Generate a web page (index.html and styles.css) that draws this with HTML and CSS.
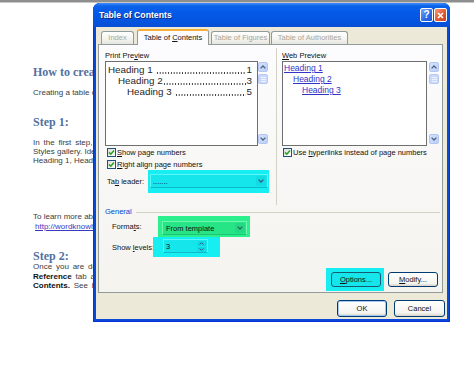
FILE: index.html
```html
<!DOCTYPE html>
<html>
<head>
<meta charset="utf-8">
<title>Table of Contents</title>
<link rel="stylesheet" href="styles.css">
</head>
<body>
<div class="topbar"></div>
<div class="doc">
  <h1 class="doc-h">How to create a table of contents</h1>
  <p class="doc-p intro">Creating a table of contents is easy.</p>
  <h2 class="doc-h step1">Step 1:</h2>
  <p class="doc-p para1">
    <span class="ln just">In the first step, apply heading styles from the</span>
    <span class="ln">Styles gallery. Identify the text you want</span>
    <span class="ln">Heading 1, Heading 2 and so on.</span>
  </p>
  <p class="doc-p learn">
    <span class="ln">To learn more about styles, visit</span>
    <a class="ln link">http://wordknowhow.com</a>
  </p>
  <h2 class="doc-h step2">Step 2:</h2>
  <p class="doc-p para2">
    <span class="ln just">Once you are done, go to the</span>
    <span class="ln just"><b>Reference</b> tab and click <b>Table of</b></span>
    <span class="ln just"><b>Contents.</b> See below.</span>
  </p>
</div>

<div class="dialog">
  <div class="titlebar">
    <span class="title">Table of Contents</span>
    <span class="tb-btns">
      <span class="tb-btn tb-help">?</span>
      <span class="tb-btn tb-close"><svg width="7" height="7" viewBox="0 0 7 7"><path d="M1 1 L6 6 M6 1 L1 6" stroke="#fff" stroke-width="1.6" fill="none"/></svg></span>
    </span>
  </div>
  <div class="dbody">
    <div class="tabs">
      <span class="tab t-index">Index</span>
      <span class="tab on t-toc">Table of <u>C</u>ontents</span>
      <span class="tab t-tof">Table of Figures</span>
      <span class="tab t-toa">Table of Authorities</span>
    </div>
    <div class="panel">
      <div class="cols">
        <div class="col col-l">
          <div class="lbl">Print Pre<u>v</u>iew</div>
          <div class="pv-row">
            <div class="pv-box print">
              <div class="toc-line"><span>Heading 1</span><span class="dots gap"></span><span>1</span></div>
              <div class="toc-line l2"><span>Heading 2</span><span class="dots"></span><span>3</span></div>
              <div class="toc-line l3"><span>Heading 3</span><span class="dots gap"></span><span>5</span></div>
            </div>
            <div class="sbar">
              <span class="sarrow"><svg width="6" height="4" viewBox="0 0 6 4"><path d="M0.6 3.4 L3 1 L5.4 3.4" fill="none" stroke="#4d6185" stroke-width="1.3"/></svg></span>
              <span class="thumb"><i></i><i></i><i></i></span>
              <span class="sp"></span>
              <span class="sarrow"><svg width="6" height="4" viewBox="0 0 6 4"><path d="M0.6 0.6 L3 3 L5.4 0.6" fill="none" stroke="#4d6185" stroke-width="1.3"/></svg></span>
            </div>
          </div>
          <div class="chk"><span class="cb"><svg width="7" height="7" viewBox="0 0 7 7"><path d="M1 3.4 L2.8 5.2 L6 1.6" fill="none" stroke="#21a121" stroke-width="1.5"/></svg></span><span><u>S</u>how page numbers</span></div>
          <div class="chk"><span class="cb"><svg width="7" height="7" viewBox="0 0 7 7"><path d="M1 3.4 L2.8 5.2 L6 1.6" fill="none" stroke="#21a121" stroke-width="1.5"/></svg></span><span><u>R</u>ight align page numbers</span></div>
          <div class="tl-row">
            <span class="tl-lbl">Ta<u>b</u> leader:</span>
            <span class="hl-cyan tl-hl">
              <span class="combo cy-combo">
                <span class="combo-txt">.......</span>
                <span class="dd"><svg width="6" height="4" viewBox="0 0 6 4"><path d="M0.6 0.6 L3 3 L5.4 0.6" fill="none" stroke="#3a5a86" stroke-width="1.3"/></svg></span>
              </span>
            </span>
          </div>
        </div>
        <div class="col col-r">
          <div class="lbl"><u>W</u>eb Preview</div>
          <div class="pv-row">
            <div class="pv-box web">
              <a>Heading 1</a>
              <a class="w2">Heading 2</a>
              <a class="w3">Heading 3</a>
            </div>
            <div class="sbar sbar-r">
              <span class="sarrow"><svg width="6" height="4" viewBox="0 0 6 4"><path d="M0.6 3.4 L3 1 L5.4 3.4" fill="none" stroke="#4d6185" stroke-width="1.3"/></svg></span>
              <span class="thumb"><i></i><i></i><i></i></span>
              <span class="sp"></span>
              <span class="sarrow"><svg width="6" height="4" viewBox="0 0 6 4"><path d="M0.6 0.6 L3 3 L5.4 0.6" fill="none" stroke="#4d6185" stroke-width="1.3"/></svg></span>
            </div>
          </div>
          <div class="chk chk-r"><span class="cb"><svg width="7" height="7" viewBox="0 0 7 7"><path d="M1 3.4 L2.8 5.2 L6 1.6" fill="none" stroke="#21a121" stroke-width="1.5"/></svg></span><span>Use <u>h</u>yperlinks instead of page numbers</span></div>
        </div>
      </div>
      <div class="general"><span>General</span><span class="gline"></span></div>
      <div class="frow fmt-row">
        <span class="fmt-lbl">Forma<u>t</u>s:</span>
        <span class="hl-green fmt-hl">
          <span class="combo gr-combo">
            <span class="combo-txt">From template</span>
            <span class="dd"><svg width="6" height="4" viewBox="0 0 6 4"><path d="M0.6 0.6 L3 3 L5.4 0.6" fill="none" stroke="#2f6a58" stroke-width="1.3"/></svg></span>
          </span>
        </span>
      </div>
      <div class="frow lvl-row">
        <span class="lvl-lbl">Show <u>l</u>evels:</span>
        <span class="hl-cyan lvl-hl">
          <span class="spin">
            <span class="spin-txt">3</span>
            <span class="spin-btns">
              <span class="sb"><svg width="5" height="3" viewBox="0 0 5 3"><path d="M0.5 2.6 L2.5 0.6 L4.5 2.6" fill="none" stroke="#3a5a86" stroke-width="1"/></svg></span>
              <span class="sb"><svg width="5" height="3" viewBox="0 0 5 3"><path d="M0.5 0.4 L2.5 2.4 L4.5 0.4" fill="none" stroke="#3a5a86" stroke-width="1"/></svg></span>
            </span>
          </span>
        </span>
      </div>
      <div class="opt-row">
        <span class="hl-cyan opt-hl"><span class="btn btn-cy"><u>O</u>ptions...</span></span>
        <span class="btn mod-btn"><u>M</u>odify...</span>
      </div>
    </div>
    <div class="okrow">
      <span class="btn ok-btn">OK</span>
      <span class="btn cancel-btn">Cancel</span>
    </div>
  </div>
</div>
</body>
</html>
```

FILE: styles.css
```css
* { box-sizing: border-box; }
html, body { margin: 0; padding: 0; }
body {
  width: 474px;
  height: 374px;
  background: #ffffff;
  overflow: hidden;
  position: relative;
  font-family: "Liberation Sans", Arial, sans-serif;
}
u { text-decoration: underline; text-underline-offset: 1px; }

.topbar {
  height: 3px;
  background: linear-gradient(#8e8e8e 0, #8e8e8e 2px, #c8c8c8 2px);
}

/* background document */
.doc {
  padding: 62px 0 0 33px;
  width: 330px;
  color: #3c3c3c;
  font-size: 8px;
}
.doc-h {
  margin: 0;
  font-family: "Liberation Serif", "Times New Roman", serif;
  font-weight: bold;
  font-size: 12px;
  line-height: 14px;
  color: #52709e;
  white-space: nowrap;
}
.doc-p { margin: 0; line-height: 10px; }
.ln { display: block; white-space: nowrap; }
.just { word-spacing: 1.6px; }
.intro { margin-top: 9px; }
.step1 { margin-top: 17px; }
.para1 { margin-top: 9px; line-height: 9px; }
.learn { margin-top: 47px; }
.link { color: #3b3bbf; text-decoration: underline; padding-left: 2px; }
.step2 { margin-top: 18px; line-height: 12px; }
.para2 { line-height: 9.5px; }
.para2 b { color: #111; }

/* dialog */
.dialog {
  position: absolute;
  left: 93px;
  top: 3px;
  width: 357px;
  height: 319px;
  background: #0a48d8;
  border-radius: 7px 7px 0 0;
  display: flex;
  flex-direction: column;
  font-size: 7.5px;
  color: #111;
  box-shadow: inset 1px 0 #0831d9, inset -1px 0 #0831d9, inset 0 -1px #0831d9;
}
.titlebar {
  height: 24px;
  flex: none;
  display: flex;
  align-items: center;
  justify-content: space-between;
  padding: 0 3px 0 6px;
  border-radius: 7px 7px 0 0;
  background: linear-gradient(#3d8cf6 0, #0b63ea 3px, #0559e7 40%, #0454de 80%, #0a4fd2 100%);
}
.title {
  color: #fff;
  font-weight: bold;
  font-size: 8.7px;
  text-shadow: 1px 1px #0a2a80;
  white-space: nowrap;
}
.tb-btns { display: flex; gap: 1px; }
.tb-btn {
  width: 13px;
  height: 14px;
  border: 1px solid #fff;
  border-radius: 2px;
  display: flex;
  align-items: center;
  justify-content: center;
  color: #fff;
  font-weight: bold;
  font-size: 10px;
  line-height: 10px;
}
.tb-help { background: linear-gradient(135deg, #79a9fa, #2d6ae8 60%, #1d55d0); }
.tb-close { background: linear-gradient(135deg, #f29a78, #e25a30 55%, #c7401c); }

.dbody {
  flex: 1;
  margin: 0 3px 3px;
  background: #ece9d8;
  padding: 2px 2px 0 2px;
  display: flex;
  flex-direction: column;
}

/* tabs */
.tabs { height: 15px; flex: none; display: flex; align-items: flex-end; }
.tab {
  height: 13px;
  line-height: 12px;
  text-align: center;
  border: 1px solid #919b9c;
  border-bottom: none;
  border-radius: 3px 3px 0 0;
  background: linear-gradient(#ffffff, #f3f3ef 60%, #e6e5df);
  color: #aca899;
  white-space: nowrap;
}
.tab.on {
  height: 16px;
  margin-bottom: -1px;
  z-index: 1;
  background: #fcfcfe;
  color: #111;
  border-top: 2px solid #f5b03a;
  line-height: 13px;
}
.t-index { margin-left: 3px; width: 33px; }
.t-toc { margin-left: 3px; width: 72px; }
.t-tof { margin-left: 2px; width: 59px; }
.t-toa { margin-left: 1px; width: 77px; }

/* panel */
.panel {
  width: 345px;
  height: 249px;
  flex: none;
  border: 1px solid #919b9c;
  background: linear-gradient(#fcfcfe, #f4f3ee);
  display: flex;
  flex-direction: column;
}
.cols { margin-top: 3px; height: 157px; flex: none; display: flex; }
.col-l { width: 178px; border-right: 1px solid #d4d2c4; padding: 3px 0 0 6px; }
.col-r { flex: 1; padding: 3px 0 0 5px; }
.lbl { height: 10px; line-height: 10px; white-space: nowrap; }
.pv-row { display: flex; height: 85px; }
.pv-box { background: #fff; border: 1px solid #6f6f6f; height: 85px; overflow: hidden; }
.print {
  width: 153px;
  padding: 2px 5px 0 2px;
  font-size: 9.8px;
  line-height: 11px;
  color: #262626;
}
.toc-line { display: flex; white-space: nowrap; }
.toc-line .dots {
  flex: 1;
  margin: 0 1px 0 0;
  background-image: radial-gradient(circle, #3a3a3a 40%, transparent 60%);
  background-size: 2.8px 1.6px;
  background-repeat: repeat-x;
  background-position: 0 7.6px;
}
.toc-line .dots.gap { margin-left: 3px; }
.l2 { padding-left: 10px; }
.l3 { padding-left: 19px; }
.web {
  width: 145px;
  padding: 1px 0 0 1px;
  font-size: 8.5px;
  line-height: 11px;
}
.web a { display: block; color: #3333c8; text-decoration: underline; white-space: nowrap; }
.web .w2 { padding-left: 9px; }
.web .w3 { padding-left: 18px; }

.sbar {
  width: 12px;
  display: flex;
  flex-direction: column;
  align-items: flex-start;
  padding: 1px 0 2px 0;
}
.sbar-r { padding-left: 2px; }
.sbar .sp { flex: 1; }
.sarrow {
  width: 10px;
  height: 10px;
  border-radius: 2px;
  background: linear-gradient(135deg, #d6e2fd, #bccff8);
  border: 1px solid #b2c6f2;
  display: flex;
  align-items: center;
  justify-content: center;
}
.thumb {
  margin-top: 2px;
  width: 10px;
  height: 10px;
  border-radius: 2px;
  background: #c9d8fb;
  border: 1px solid #b6caf4;
  display: flex;
  flex-direction: column;
  align-items: center;
  justify-content: center;
  gap: 1px;
}
.thumb i { display: block; width: 5px; height: 1px; background: #eef3ff; }

.chk { height: 12px; display: flex; align-items: center; padding-left: 2px; white-space: nowrap; }
.chk-r { padding-left: 1px; }
.cb {
  width: 9px;
  height: 9px;
  flex: none;
  border: 1px solid #1c5180;
  background: linear-gradient(135deg, #dcdcd6, #ffffff);
  margin-right: 1px;
  display: flex;
  align-items: center;
  justify-content: center;
}

.tl-row { height: 23px; display: flex; align-items: center; padding-left: 2px; white-space: nowrap; }
.tl-lbl { width: 41px; }
.hl-cyan { background: #16eef1; }
.hl-green { background: #2cf08c; }
.tl-hl { width: 121px; height: 23px; padding: 4px 1px 0 2px; display: block; }
.combo {
  height: 14px;
  display: flex;
  align-items: center;
  justify-content: space-between;
  padding: 0 1px 0 2px;
  border-radius: 1px;
}
.cy-combo { border: 1px solid #5af6f8; border-bottom-color: #0bbcc8; background: #14e6ec; }
.gr-combo { border: 1px solid #70f7b2; border-bottom-color: #1cc476; background: #27e486; padding-left: 3px; }
.combo-txt { white-space: nowrap; }
.dd {
  width: 10px;
  height: 10px;
  border-radius: 2px;
  background: rgba(0, 80, 120, 0.07);
  display: flex;
  align-items: center;
  justify-content: center;
}

.general {
  margin-top: 3px;
  height: 8px;
  flex: none;
  display: flex;
  align-items: center;
  padding: 0 2px 0 6px;
  color: #0046d5;
  line-height: 8px;
}
.gline { flex: 1; height: 1px; background: #d4d2c4; margin-left: 4px; }

.frow { display: flex; align-items: center; padding-left: 13px; white-space: nowrap; flex: none; }
.fmt-row { height: 21px; }
.fmt-lbl { width: 46px; }
.fmt-hl { width: 92px; height: 21px; padding: 5px 3px 0 4px; display: block; }
.lvl-row { height: 20px; }
.lvl-lbl { width: 41px; }
.lvl-hl { width: 67px; height: 20px; padding: 2px 0 0 10px; display: block; }
.spin {
  width: 45px;
  height: 14px;
  display: flex;
  align-items: center;
  justify-content: space-between;
  border: 1px solid #5af6f8;
  border-bottom-color: #0bbcc8;
  background: #14e6ec;
  padding: 0 1px 0 2px;
}
.spin-btns { display: flex; flex-direction: column; gap: 1px; }
.sb {
  width: 9px;
  height: 5px;
  border-radius: 1px;
  background: rgba(0, 80, 120, 0.08);
  display: flex;
  align-items: center;
  justify-content: center;
}

.opt-row {
  margin-top: 11px;
  height: 23px;
  flex: none;
  display: flex;
  justify-content: flex-end;
  align-items: center;
  padding-right: 4px;
}
.opt-hl { width: 58px; height: 23px; padding: 4px 3px 4px 5px; display: block; }
.btn {
  display: block;
  width: 50px;
  height: 15px;
  line-height: 13px;
  text-align: center;
  border: 1px solid #003c74;
  border-radius: 3px;
  background: linear-gradient(#ffffff, #f4f4f0 80%, #d8d2c6);
  white-space: nowrap;
}
.btn-cy { background: #14e6ec; border-color: #1a5a70; }
.mod-btn { margin-left: 4px; }

.okrow {
  margin-top: 7px;
  display: flex;
  justify-content: flex-end;
  gap: 7px;
  flex: none;
}
.ok-btn { height: 17px; line-height: 15px; box-shadow: inset 0 0 0 1px #a8c6f4; }
.cancel-btn { width: 51px; height: 17px; line-height: 15px; }
```
